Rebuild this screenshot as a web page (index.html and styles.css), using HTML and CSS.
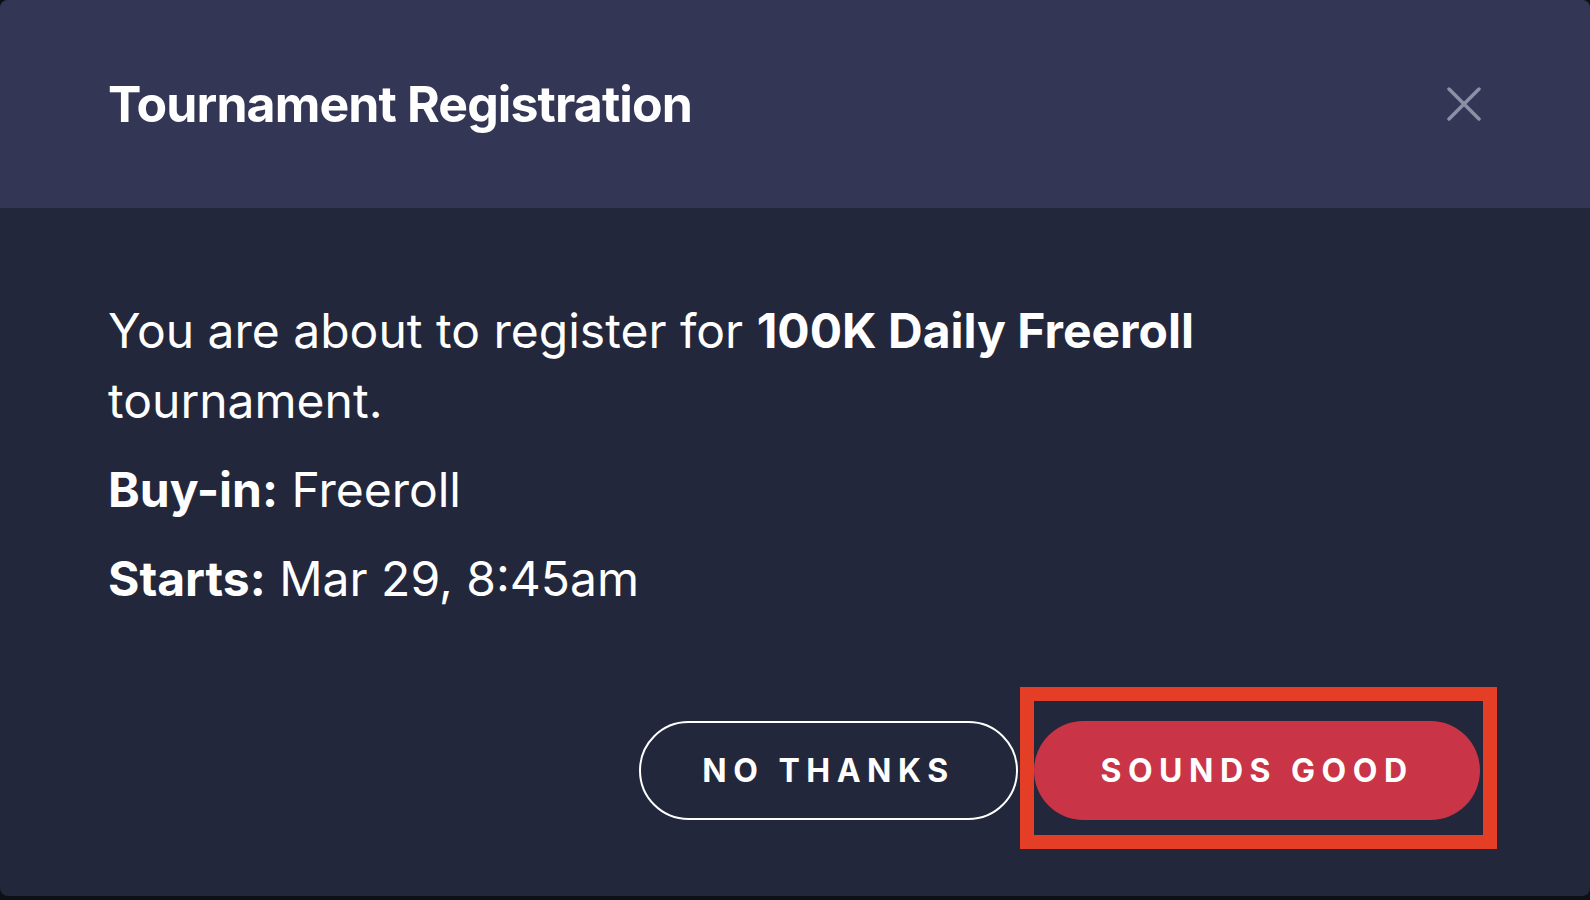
FILE: index.html
```html
<!DOCTYPE html>
<html lang="en">
<head>
    <meta charset="UTF-8">
    <meta name="viewport" content="width=device-width, initial-scale=1.0">
    <title>Tournament Registration</title>
    <link rel="stylesheet" href="styles.css">
</head>
<body>
    <div class="modal">
        <div class="modal-header">
            <h1>Tournament Registration</h1>
            <button class="close" aria-label="Close">
                <svg width="34" height="34" viewBox="0 0 34 34">
                    <path d="M2 2 L32 32 M32 2 L2 32" stroke="#8c8fa6" stroke-width="3.5" stroke-linecap="round"/>
                </svg>
            </button>
        </div>
        <div class="modal-body">
            <p>You are about to register for <b>100K Daily Freeroll</b> tournament.</p>
            <p><b>Buy-in:</b> Freeroll</p>
            <p><b>Starts:</b> Mar 29, 8:45am</p>
            <div class="actions">
                <button class="btn btn-outline">NO THANKS</button>
                <div class="marked">
                    <button class="btn btn-primary">SOUNDS GOOD</button>
                    <span class="highlight"></span>
                </div>
            </div>
        </div>
    </div>
</body>
</html>
```

FILE: styles.css
```css
body {
    margin: 0;
    background: #0e1018;
    font-family: Inter, "Noto Sans", sans-serif;
    color: #fff;
}
.modal {
    height: 896px;
    border-radius: 8px;
    overflow: hidden;
    background: #23273c;
    display: flex;
    flex-direction: column;
}
.modal-header {
    height: 208px;
    flex-shrink: 0;
    background: #333654;
    display: flex;
    align-items: center;
    justify-content: space-between;
    padding: 0 110px 0 108px;
}
.modal-header h1 {
    margin: 0;
    font-size: 50px;
    font-weight: 700;
    letter-spacing: -0.9px;
}
.close {
    background: none;
    border: 0;
    padding: 0;
    display: flex;
    margin-right: -1px;
}
.modal-body {
    flex: 1;
    padding: 88px 110px 0 108px;
    display: flex;
    flex-direction: column;
}
.modal-body p {
    margin: 0 0 19px;
    font-size: 48px;
    line-height: 70px;
    max-width: 1150px;
}
.actions {
    display: flex;
    justify-content: flex-end;
    gap: 16px;
    margin-top: 88px;
}
.btn {
    height: 99px;
    border-radius: 50px;
    font-family: Inter, sans-serif;
    font-size: 32px;
    font-weight: 700;
    letter-spacing: 6.5px;
    color: #fff;
    cursor: pointer;
}
.btn-outline {
    width: 379px;
    background: transparent;
    border: 2px solid #fff;
}
.btn-primary {
    width: 446px;
    background: #c93446;
    border: 0;
}
.marked {
    position: relative;
    display: flex;
}
.highlight {
    position: absolute;
    top: -34px;
    left: -14px;
    right: -17px;
    bottom: -29px;
    border: 14px solid #e53e26;
}
```
